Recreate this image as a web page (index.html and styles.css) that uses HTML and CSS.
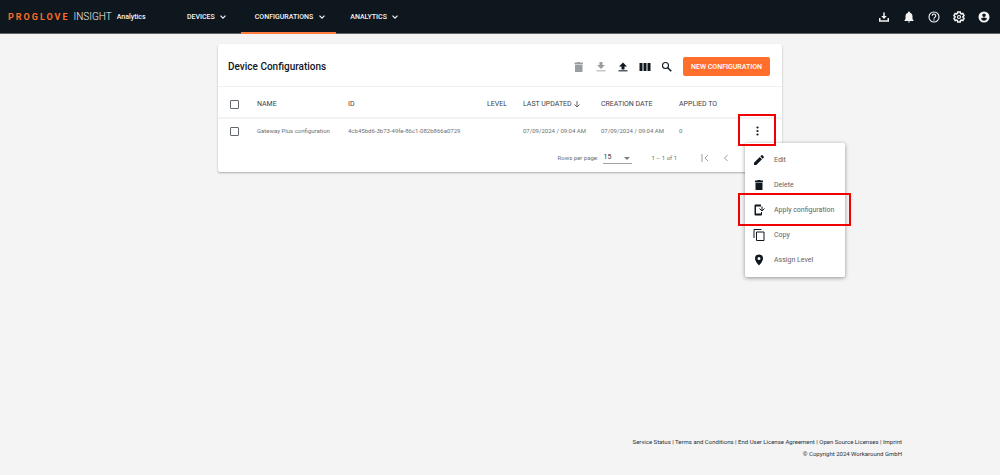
FILE: index.html
```html
<!DOCTYPE html>
<html lang="en">
<head>
<meta charset="utf-8">
<title>ProGlove Insight – Device Configurations</title>
<link rel="stylesheet" href="styles.css">
</head>
<body>
<header class="topbar">
  <a class="brand" href="#"><span class="brand-name">PROGLOVE</span><span class="brand-product">INSIGHT</span><span class="brand-tag">Analytics</span></a>
  <nav class="nav">
    <a class="nav-link" href="#">DEVICES <svg class="chevron" viewBox="0 0 8 8"><path d="M1.5 2.7 4 5.2 6.5 2.7"/></svg></a>
    <a class="nav-link nav-link-active" href="#">CONFIGURATIONS <svg class="chevron" viewBox="0 0 8 8"><path d="M1.5 2.7 4 5.2 6.5 2.7"/></svg></a>
    <a class="nav-link" href="#">ANALYTICS <svg class="chevron" viewBox="0 0 8 8"><path d="M1.5 2.7 4 5.2 6.5 2.7"/></svg></a>
  </nav>
  <div class="top-actions">
    <button class="icon-button" aria-label="Downloads"><svg class="icon" viewBox="0 0 24 24"><path d="M10.500 3h3v7h4L12 16l-5.500-6h4zM2 14h3v4.500h14V14h3v7.500H2z"/></svg></button>
    <button class="icon-button" aria-label="Notifications"><svg class="icon" viewBox="0 0 24 24"><path d="M12 23c1.100 0 2-.9 2-2h-4c0 1.100.9 2 2 2zm7-7v-5.500c0-3.400-2-6.100-5-6.900V3a2 2 0 0 0-4 0v.6c-3 .8-5 3.500-5 6.900V16l-2 2.500V20h18v-1.500z"/></svg></button>
    <button class="icon-button" aria-label="Help"><svg class="icon" viewBox="0 0 24 24"><path d="M8.500 9.500a3.500 3.500 0 1 1 5.500 2.800c-1.300 1-2 1.500-2 3" fill="none" stroke="currentColor" stroke-width="2.200"/><circle cx="12" cy="18" r="1.400"/><circle cx="12" cy="12" r="10" fill="none" stroke="currentColor" stroke-width="2.200"/></svg></button>
    <button class="icon-button" aria-label="Settings"><svg class="icon" viewBox="0 0 24 24"><path d="M9.500 2h5l.6 3 1.700 1 2.900-1 2.500 4.300-2.300 2v1.400l2.300 2-2.500 4.300-2.900-1-1.700 1-.6 3h-5l-.6-3-1.700-1-2.900 1-2.500-4.300 2.300-2v-1.400l-2.300-2L4.300 5l2.900 1 1.700-1z" fill="none" stroke="currentColor" stroke-width="3"/><circle cx="12" cy="12" r="3" fill="none" stroke="currentColor" stroke-width="2.400"/></svg></button>
    <button class="icon-button" aria-label="Account"><svg class="icon" viewBox="0 0 24 24"><path fill-rule="evenodd" d="M12 1a11 11 0 1 0 0 22 11 11 0 0 0 0-22zm0 4a3.500 3.500 0 1 1 0 7 3.500 3.500 0 0 1 0-7zm0 14.500a7 7 0 0 1-6-3.300c0-2 4-3 6-3s6 1 6 3a7 7 0 0 1-6 3.300z"/></svg></button>
  </div>
</header>

<main class="content">
  <section class="card">
    <div class="card-header">
      <h1 class="card-title">Device Configurations</h1>
      <div class="toolbar">
        <button class="icon-button" aria-label="Delete" disabled><svg class="icon" viewBox="0 0 24 24"><path d="M4 7h15v14q0 1-1 1H5q-1 0-1-1zM3 3h4.500l1-1h5l1 1H20v3H3z"/></svg></button>
        <button class="icon-button" aria-label="Download" disabled><svg class="icon" viewBox="0 0 24 24"><path d="M9 2h6v6h5l-8 8-8-8h5z"/><path d="M3 18h18v3H3z" opacity=".6"/></svg></button>
        <button class="icon-button" aria-label="Upload"><svg class="icon" viewBox="0 0 24 24"><path d="M9 17h6v-6h5l-8-8-8 8h5z"/><path d="M3 18h18v3H3z" opacity=".7"/></svg></button>
        <button class="icon-button" aria-label="Columns"><svg class="icon" viewBox="0 0 24 24"><path d="M1 4h6v16H1zM9 4h6v16H9zM17 4h6v16h-6z"/></svg></button>
        <button class="icon-button" aria-label="Search"><svg class="icon" viewBox="0 0 24 24"><circle cx="9" cy="9" r="6" fill="none" stroke="currentColor" stroke-width="2.200"/><path d="m13.500 13.500 7 7" fill="none" stroke="currentColor" stroke-width="3"/></svg></button>
        <button class="primary-button">NEW CONFIGURATION</button>
      </div>
    </div>
    <table class="table">
      <colgroup><col class="col-check"><col class="col-name"><col class="col-id"><col class="col-level"><col class="col-date"><col class="col-date"><col class="col-applied"><col class="col-menu"></colgroup>
      <thead>
        <tr>
          <th class="check-cell"><input class="checkbox" type="checkbox" aria-label="Select all"></th>
          <th>NAME</th><th>ID</th><th>LEVEL</th>
          <th>LAST UPDATED <svg class="sort" viewBox="0 0 8 8"><path d="M4 1v6M1.500 4.500 4 7l2.500-2.500"/></svg></th>
          <th>CREATION DATE</th><th>APPLIED TO</th><th></th>
        </tr>
      </thead>
      <tbody>
        <tr>
          <td class="check-cell"><input class="checkbox" type="checkbox" aria-label="Select Gateway Plus configuration"></td>
          <td>Gateway Plus configuration</td><td>4cb45bd6-3b73-49fe-86c1-082b866a0729</td><td></td>
          <td>07/09/2024 / 09:04 AM</td><td>07/09/2024 / 09:04 AM</td><td>0</td>
          <td class="menu-cell">
            <button class="icon-button more-button" aria-label="More actions"><svg class="icon" viewBox="0 0 24 24"><circle cx="11" cy="5" r="2.200"/><circle cx="11" cy="12" r="2.200"/><circle cx="11" cy="19" r="2.200"/></svg></button>
            <div class="menu" role="menu">
              <button class="menu-item" role="menuitem"><svg class="icon" viewBox="0 0 24 24"><path d="M2 17.500V22h4.500L18 10.500 13.500 6zM21.700 7c.5-.5.5-1.200 0-1.700l-3-3c-.5-.5-1.200-.5-1.700 0L14.700 4.700l4.600 4.600z"/></svg>Edit</button>
              <button class="menu-item" role="menuitem"><svg class="icon" viewBox="0 0 24 24"><path d="M5 7h14v14q0 1-1 1H6q-1 0-1-1zM4 3h4.500l1-1h5l1 1H20v3H4z"/></svg>Delete</button>
              <button class="menu-item menu-item-marked" role="menuitem"><svg class="icon" viewBox="0 0 24 24"><path d="M5 1h11v4H6v14h10v-3h2v5q0 2-2 2H5q-2 0-2-2V3q0-2 2-2z"/><path d="M18 5v8M13 9l5 5 5-5" fill="none" stroke="currentColor" stroke-width="2"/></svg>Apply configuration</button>
              <button class="menu-item" role="menuitem"><svg class="icon" viewBox="0 0 24 24"><path d="M2 18V1h15M7 6h15v17H7z" fill="none" stroke="currentColor" stroke-width="2"/></svg>Copy</button>
              <button class="menu-item" role="menuitem"><svg class="icon" viewBox="0 0 24 24"><path fill-rule="evenodd" d="M12 1a8 8 0 0 0-8 8c0 6 8 14 8 14s8-8 8-14a8 8 0 0 0-8-8zm0 5a3 3 0 1 1 0 6 3 3 0 0 1 0-6z"/></svg>Assign Level</button>
            </div>
          </td>
        </tr>
      </tbody>
    </table>
    <div class="pagination">
      <label for="rows">Rows per page:</label>
      <span class="select-wrap"><select class="select" id="rows"><option>15</option><option>30</option></select></span>
      <span class="range">1 – 1 of 1</span>
      <div class="pager">
        <button class="icon-button" aria-label="First page" disabled><svg class="page-icon" viewBox="0 0 10 10"><path d="M2 1v8M8 2 5 5l3 3"/></svg></button>
        <button class="icon-button" aria-label="Previous page" disabled><svg class="page-icon" viewBox="0 0 10 10"><path d="M6.500 2l-3 3 3 3"/></svg></button>
        <button class="icon-button" aria-label="Next page" disabled><svg class="page-icon" viewBox="0 0 10 10"><path d="M3.500 2l3 3-3 3"/></svg></button>
        <button class="icon-button" aria-label="Last page" disabled><svg class="page-icon" viewBox="0 0 10 10"><path d="M8 1v8M2 2l3 3-3 3"/></svg></button>
      </div>
    </div>
  </section>
</main>

<footer class="footer">
  <div><a href="#">Service Status</a> | <a href="#">Terms and Conditions</a> | <a href="#">End User License Agreement</a> | <a href="#">Open Source Licenses</a> | <a href="#">Imprint</a></div>
  <div>© Copyright 2024 Workaround GmbH</div>
</footer>
</body>
</html>
```
FILE: styles.css
```css
* { box-sizing: border-box; }
body {
  margin: 0;
  min-height: 100vh;
  display: flex;
  flex-direction: column;
  background: #f4f4f4;
  color: #10181f;
  font: 6px/12px Roboto, sans-serif;
}
a { color: inherit; text-decoration: none; }
button { margin: 0; padding: 0; border: 0; background: none; color: inherit; font: inherit; }
.icon { display: block; width: 12px; height: 12px; fill: currentColor; flex: none; }
.icon-button { display: grid; place-items: center; width: 12px; height: 12px; }
.icon-button:disabled { color: #9b9ea1; }

.topbar {
  display: flex;
  height: 34px;
  padding: 0 10px 0 8px;
  background: #0e171e;
  border-bottom: 1px solid #62666b;
  color: #f4f4f4;
}
.brand { display: flex; align-items: center; width: 179px; flex: none; }
.brand-name { color: #ff6b26; font-size: 9px; font-weight: 700; letter-spacing: 2px; margin-right: 4px; }
.brand-product { font-size: 10px; font-weight: 300; margin-right: 5px; }
.brand-tag { font-size: 7px; font-weight: 500; }
.nav { display: flex; gap: 14px; flex: 1; }
.nav-link {
  display: flex;
  align-items: center;
  gap: 4px;
  height: 34px;
  font-size: 7px;
  font-weight: 500;
  border-bottom: 2px solid transparent;
  border-top: 2px solid transparent;
}
.nav-link-active { gap: 5px; padding: 0 10px 0 14px; border-bottom-color: #ff7c40; }
.chevron { width: 8px; height: 8px; fill: none; stroke: currentColor; stroke-width: 1.2; }
.top-actions { display: flex; align-items: center; gap: 13px; }

.content { flex: 1; padding: 10px 16px; }
.card {
  width: 100%;
  max-width: 564px;
  margin: 0 auto;
  background: #fff;
  border-radius: 2px;
  box-shadow: 0 1px 2px rgba(0, 0, 0, .3);
}
.card-header {
  display: flex;
  align-items: center;
  justify-content: space-between;
  padding: 13px 12px 10px 10px;
  border-bottom: 1px solid #f0f0f0;
}
.card-title { margin: 0; font-size: 10px; font-weight: 500; }
.toolbar { display: flex; align-items: center; gap: 10px; }
.primary-button {
  height: 19px;
  padding: 0 8px;
  border-radius: 2px;
  background: #ff6f2b;
  color: #fff;
  font-size: 7px;
  font-weight: 500;
}

.table { width: 100%; border-collapse: collapse; table-layout: fixed; }
.table th, .table td { padding: 0; text-align: left; white-space: nowrap; vertical-align: middle; }
.table th { height: 31px; padding-top: 4px; font-size: 7px; font-weight: 400; color: #3a4249; border-bottom: 2px solid #f2f2f2; }
.table td { height: 25px; color: #6b7075; }
.col-check { width: 39px; }
.col-name { width: 91px; }
.col-id { width: 139px; }
.col-level { width: 36px; }
.col-date { width: 78px; }
.col-menu { width: 49px; }
.table .check-cell { padding-left: 12px; }
.checkbox {
  appearance: none;
  display: block;
  width: 9px;
  height: 9px;
  margin: 0;
  border: 1px solid #62686e;
  border-radius: 1px;
  background: #fff;
}
.sort { width: 8px; height: 8px; vertical-align: middle; fill: none; stroke: #62686e; stroke-width: 1; }
.table .menu-cell { position: relative; }
.more-button { margin: 0 auto; color: #10181f; }
.menu-cell::after, .menu-item-marked::after {
  content: "";
  position: absolute;
  border: 2px solid #f00000;
  pointer-events: none;
}
.menu-cell::after { inset: -5px 6px -3px 5px; z-index: 2; }
.menu {
  position: absolute;
  z-index: 1;
  top: 24px;
  left: 12px;
  width: 100px;
  padding: 4px 0 5px;
  background: #fff;
  border-radius: 2px;
  box-shadow: 0 1px 4px rgba(0, 0, 0, .4);
}
.menu-item {
  position: relative;
  display: flex;
  align-items: center;
  gap: 9px;
  width: 100%;
  height: 25px;
  padding-left: 8px;
  color: #5d6267;
  font-size: 7px;
}
.menu-item .icon { color: #10181f; }
.menu-item-marked::after { inset: -4px -6px -4px -7px; }

.pagination {
  display: flex;
  align-items: center;
  justify-content: flex-end;
  padding: 8px 8px 8px 0;
  color: #6b7075;
}
.select-wrap { position: relative; margin: 0 19px 0 5px; }
.select-wrap::after {
  content: "";
  position: absolute;
  right: 2px;
  top: 6px;
  border: 3px solid transparent;
  border-top-color: #7b8085;
  border-bottom: 0;
  pointer-events: none;
}
.select {
  appearance: none;
  display: block;
  width: 29px;
  height: 13px;
  padding: 0;
  border: 0;
  border-bottom: 1px solid #a0a3a6;
  border-radius: 0;
  background: transparent;
  color: #28313a;
  font: 7px/12px Roboto, sans-serif;
}
.range { margin-right: 22px; }
.pager { display: flex; gap: 9px; }
.page-icon { width: 10px; height: 10px; fill: none; stroke: currentColor; stroke-width: 1; }

.footer { padding: 0 98px 15px 16px; text-align: right; color: #28313a; }
```
